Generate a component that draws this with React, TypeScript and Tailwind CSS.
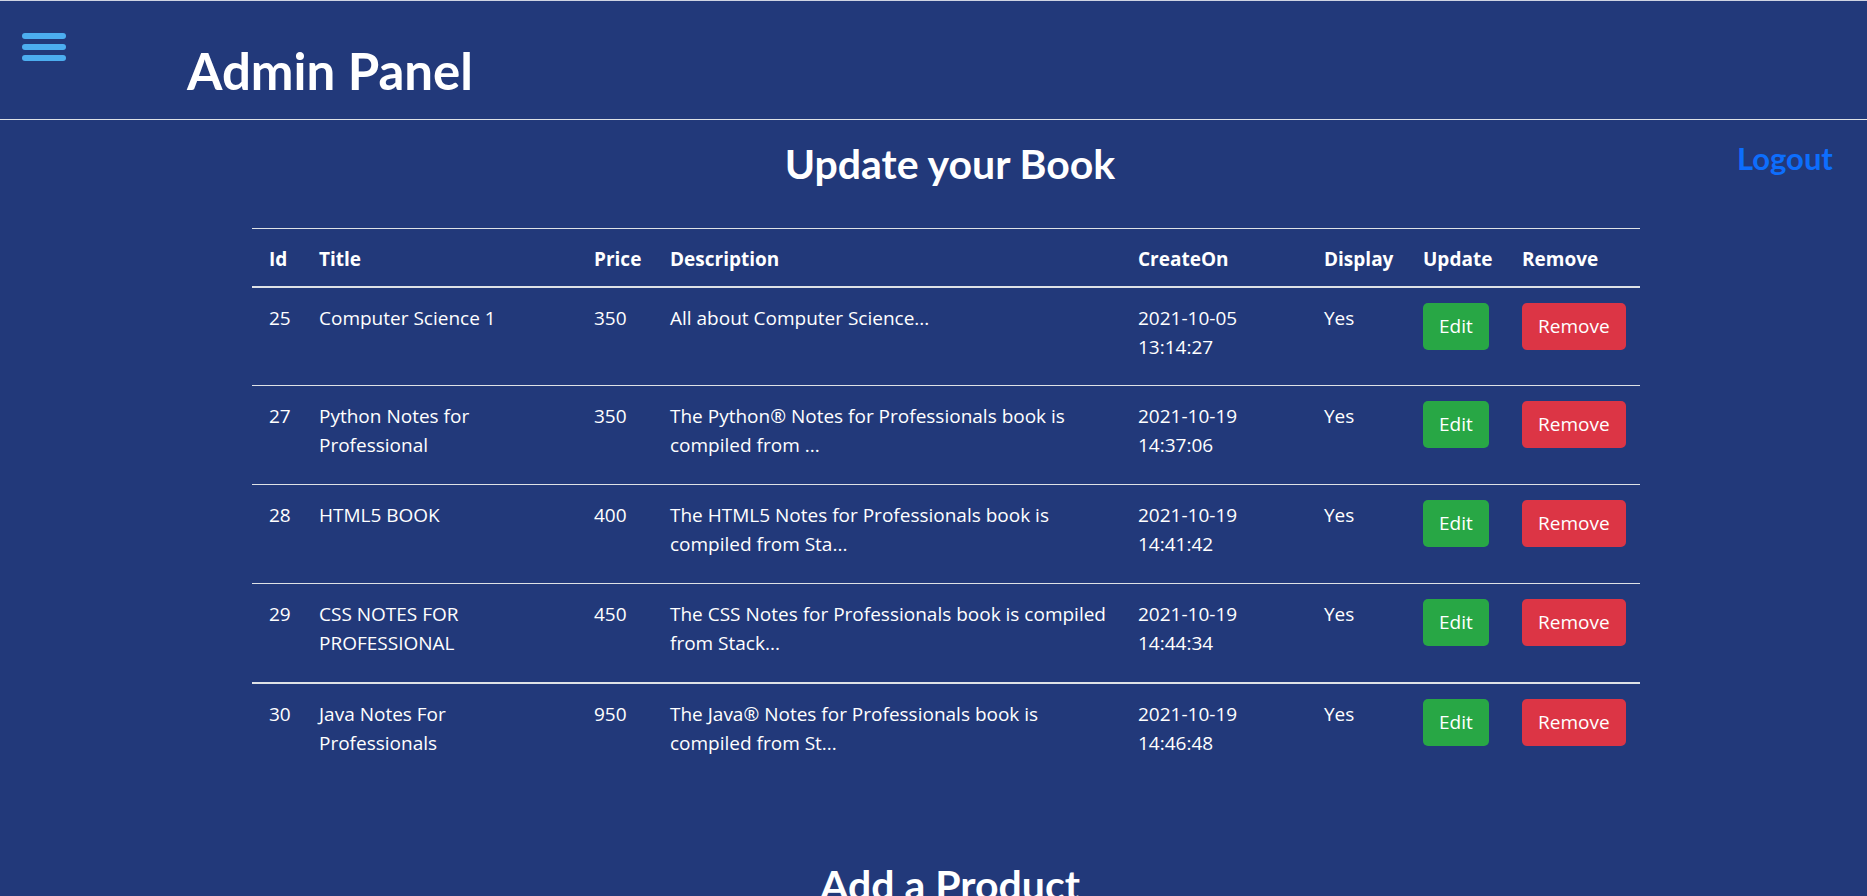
import React from "react";

type Book = {
  id: string;
  title: string[];
  price: string;
  desc: string[];
  date: string[];
  display: string;
};

const books: Book[] = [
  {
    id: "25",
    title: ["Computer Science 1"],
    price: "350",
    desc: ["All about Computer Science..."],
    date: ["2021-10-05", "13:14:27"],
    display: "Yes",
  },
  {
    id: "27",
    title: ["Python Notes for", "Professional"],
    price: "350",
    desc: ["The Python® Notes for Professionals book is", "compiled from ..."],
    date: ["2021-10-19", "14:37:06"],
    display: "Yes",
  },
  {
    id: "28",
    title: ["HTML5 BOOK"],
    price: "400",
    desc: ["The HTML5 Notes for Professionals book is", "compiled from Sta..."],
    date: ["2021-10-19", "14:41:42"],
    display: "Yes",
  },
  {
    id: "29",
    title: ["CSS NOTES FOR", "PROFESSIONAL"],
    price: "450",
    desc: ["The CSS Notes for Professionals book is compiled", "from Stack..."],
    date: ["2021-10-19", "14:44:34"],
    display: "Yes",
  },
  {
    id: "30",
    title: ["Java Notes For", "Professionals"],
    price: "950",
    desc: ["The Java® Notes for Professionals book is", "compiled from St..."],
    date: ["2021-10-19", "14:46:48"],
    display: "Yes",
  },
];

const cols = "grid grid-cols-[50px_275px_76px_468px_186px_99px_99px_135px]";

function Lines({ lines }: { lines: string[] }) {
  return (
    <>
      {lines.map((l) => (
        <span key={l} className="block whitespace-nowrap">
          {l}
        </span>
      ))}
    </>
  );
}

const rowClasses = [
  "h-[98px] border-b border-[#dee2e6]",
  "h-[99px] border-b border-[#dee2e6]",
  "h-[99px] border-b border-[#dee2e6]",
  "h-[100px] border-b-2 border-[#dee2e6]",
  "h-[98px]",
];

export default function App() {
  return (
    <div className="min-h-screen w-full bg-[#22397a] border-t border-[#cfd4e2] text-white font-['Open_Sans',sans-serif]">
      <header className="flex h-[119px] items-start border-b border-[#dee2e6]">
        <button className="ml-[22px] mt-[32px] flex flex-col gap-[5px]" aria-label="menu">
          <span className="block h-[6px] w-[44px] rounded-full bg-[#4caef0]" />
          <span className="block h-[6px] w-[44px] rounded-full bg-[#4caef0]" />
          <span className="block h-[6px] w-[44px] rounded-full bg-[#4caef0]" />
        </button>
        <h1 className="ml-[121px] mt-[44px] font-['Lato',sans-serif] text-[51px] font-bold leading-none">
          Admin Panel
        </h1>
      </header>

      <main className="flex items-start pt-[20px]">
        <section className="ml-[252px] w-[1388px] shrink-0">
          <h2 className="pl-2 text-center font-['Lato',sans-serif] text-[41px] font-bold leading-[48px]">
            Update your Book
          </h2>

          <div className="mt-[40px] text-[19px] leading-[28.5px]">
            <div className={`${cols} h-[60px] border-t border-b-2 border-[#dee2e6] font-bold`}>
              {["Id", "Title", "Price", "Description", "CreateOn", "Display", "Update", "Remove"].map((h) => (
                <div key={h} className="px-[17px] pt-[16px] whitespace-nowrap">
                  {h}
                </div>
              ))}
            </div>

            {books.map((b, i) => (
              <div key={b.id} className={`${cols} ${rowClasses[i]}`}>
                <div className="px-[17px] pt-[16px]">{b.id}</div>
                <div className="px-[17px] pt-[16px]">
                  <Lines lines={b.title} />
                </div>
                <div className="px-[17px] pt-[16px]">{b.price}</div>
                <div className="px-[17px] pt-[16px]">
                  <Lines lines={b.desc} />
                </div>
                <div className="px-[17px] pt-[16px]">
                  <Lines lines={b.date} />
                </div>
                <div className="px-[17px] pt-[16px]">{b.display}</div>
                <div className="px-[17px] pt-[15px]">
                  <button className="flex h-[47px] items-center rounded-[5px] bg-[#28a745] px-[16px] text-[19px] text-white">
                    Edit
                  </button>
                </div>
                <div className="px-[17px] pt-[15px]">
                  <button className="flex h-[47px] items-center rounded-[5px] bg-[#dc3545] px-[16px] text-[19px] text-white">
                    Remove
                  </button>
                </div>
              </div>
            ))}
          </div>

          <h2 className="mt-[79px] pl-2 text-center font-['Lato',sans-serif] text-[41px] font-bold leading-[48px]">
            Add a Product
          </h2>
        </section>

        <a href="#" className="ml-[97px] font-['Lato',sans-serif] text-[31px] font-bold leading-[36px] text-[#0d6efd]">
          Logout
        </a>
      </main>
    </div>
  );
}
